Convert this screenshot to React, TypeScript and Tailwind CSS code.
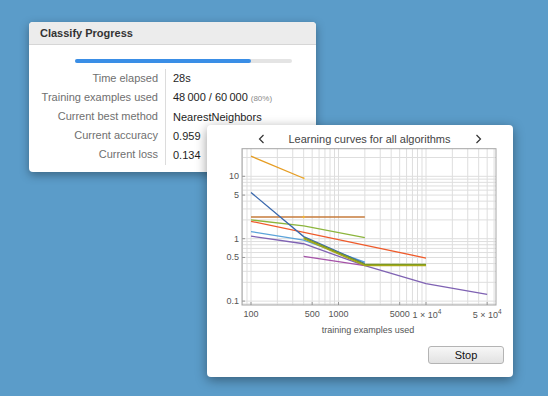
const X = (n: number) => 251 + 87.5 * Math.log10(n / 100);
const Y = (v: number) => 238.7 - 62.4 * Math.log10(v);

const curves: { color: string; pts: [number, number][]; w?: number }[] = [
  { color: "#e69d23", pts: [[100, 21], [400, 9.3]] },
  { color: "#c67b3b", pts: [[100, 2.23], [2000, 2.23]], w: 1.6 },
  { color: "#8cb53c", pts: [[100, 2.0], [400, 1.6], [2000, 1.04]] },
  { color: "#ef5a2a", pts: [[100, 1.9], [10000, 0.49]] },
  { color: "#5ba3d9", pts: [[100, 1.3], [400, 0.95], [2000, 0.42]] },
  { color: "#7f62b3", pts: [[100, 1.1], [400, 0.83], [2000, 0.37], [10000, 0.19], [50000, 0.128]] },
  { color: "#a552a8", pts: [[400, 0.52], [2000, 0.37]] },
  { color: "#3a68ad", pts: [[100, 5.5], [400, 1.08], [2000, 0.4]] },
  { color: "#7d9a22", pts: [[400, 1.04], [2000, 0.385], [10000, 0.385]], w: 1.6 },
  { color: "#a8a818", pts: [[400, 1.0], [2000, 0.37], [10000, 0.37]] },
];

const rows = [
  ["Time elapsed", "28s"],
  ["Training examples used", "48\u2009000 / 60\u2009000"],
  ["Current best method", "NearestNeighbors"],
  ["Current accuracy", "0.959"],
  ["Current loss", "0.134"],
];

function Chevron({ right }: { right?: boolean }) {
  return (
    <svg width="7" height="10" viewBox="0 0 7 10" className="block">
      <path
        d={right ? "M1.5 1 L5.5 5 L1.5 9" : "M5.5 1 L1.5 5 L5.5 9"}
        fill="none"
        stroke="#333"
        strokeWidth="1.2"
      />
    </svg>
  );
}

function Chart() {
  const L = 242, R = 496, T = 148.7, B = 305;
  const xs: number[] = [];
  for (let d = 1; d <= 4; d++)
    for (let k = 1; k <= 9; k++) {
      const x = X(k * Math.pow(10, d));
      if (x > L + 0.5 && x < R - 0.5) xs.push(x);
    }
  const ys: number[] = [];
  for (let d = -2; d <= 1; d++)
    for (let k = 1; k <= 9; k++) {
      const y = Y(k * Math.pow(10, d));
      if (y > T + 0.5 && y < B - 0.5) ys.push(y);
    }
  const yl: [string, number][] = [["10", 10], ["5", 5], ["1", 1], ["0.5", 0.5], ["0.1", 0.1]];
  const xl: [string, number][] = [["100", 100], ["500", 500], ["1000", 1000], ["5000", 5000]];
  return (
    <svg width="306" height="191" className="block">
      <g transform="translate(-207,-147)" fontFamily="Liberation Sans, Arial, sans-serif" fontSize="9" fill="#555">
        <rect x={L} y={T} width={R - L} height={B - T} fill="#fff" />
        {xs.map((x, i) => (
          <line key={"x" + i} x1={x} x2={x} y1={T} y2={B} stroke="#dedede" strokeWidth="1" />
        ))}
        {ys.map((y, i) => (
          <line key={"y" + i} x1={L} x2={R} y1={y} y2={y} stroke="#dedede" strokeWidth="1" />
        ))}
        {curves.map((c, i) => (
          <polyline
            key={i}
            points={c.pts.map(([n, v]) => `${X(n)},${Y(v)}`).join(" ")}
            fill="none"
            stroke={c.color}
            strokeWidth={c.w ?? 1.3}
          />
        ))}
        <circle cx={X(400)} cy={Y(2.23)} r="1.2" fill="#f2b632" />
        <circle cx={X(400)} cy={Y(9.3)} r="0.9" fill="#f2b632" />
        <rect x={L} y={T} width={R - L} height={B - T} fill="none" stroke="#a5a5a5" strokeWidth="1" />
        {yl.map(([t, v]) => (
          <g key={t}>
            <line x1={L} x2={L + 3} y1={Y(v)} y2={Y(v)} stroke="#999" />
            <text x="239" y={Y(v) + 3} textAnchor="end">{t}</text>
          </g>
        ))}
        {xl.map(([t, n]) => (
          <g key={t}>
            <line x1={X(n)} x2={X(n)} y1={B} y2={B - 3} stroke="#999" />
            <text x={X(n)} y="316.5" textAnchor="middle">{t}</text>
          </g>
        ))}
        <line x1={X(10000)} x2={X(10000)} y1={B} y2={B - 3} stroke="#999" />
        <line x1={X(50000)} x2={X(50000)} y1={B} y2={B - 3} stroke="#999" />
        <text x={X(10000) + 1} y="317.5" textAnchor="middle">
          1 × 10<tspan fontSize="6.5" dy="-3.5">4</tspan>
        </text>
        <text x={X(50000)} y="317.5" textAnchor="middle">
          5 × 10<tspan fontSize="6.5" dy="-3.5">4</tspan>
        </text>
        <text x="368" y="333" textAnchor="middle">training examples used</text>
      </g>
    </svg>
  );
}

export default function App() {
  return (
    <div className="relative w-[548px] h-[396px] overflow-hidden bg-[#5b9cc9] font-['Liberation_Sans',Arial,sans-serif]">
      {/* Classify Progress window */}
      <div className="absolute left-[29px] top-[22px] w-[287px] rounded-[4px] bg-white shadow-[0_3px_10px_rgba(0,0,0,0.35)] overflow-hidden">
        <div className="h-[23px] bg-[#ececec] border-b border-[#d6d6d6] pl-[11px] flex items-center text-[11px] font-bold text-[#333]">
          Classify Progress
        </div>
        <div className="pb-[7px]">
          <div className="ml-[46px] mt-[14px] w-[217px] h-[4px] rounded-full bg-[#e4e4e4]">
            <div className="w-[176px] h-[4px] rounded-full bg-[#3a8ee6]" />
          </div>
          <div className="mt-[6px] flex text-[11px] leading-[19px]">
            <div className="w-[137px] pr-[7px] text-right text-[#6f6f6f] border-r border-[#dcdcdc]">
              {rows.map(([l]) => (
                <div key={l}>{l}</div>
              ))}
            </div>
            <div className="pl-[7px] text-[#1e1e1e]">
              {rows.map(([l, v], i) => (
                <div key={l}>
                  {v}
                  {i === 1 && <span className="ml-[3px] text-[8px] text-[#8a8a8a]">(80%)</span>}
                </div>
              ))}
            </div>
          </div>
        </div>
      </div>

      {/* Learning curves window */}
      <div className="absolute left-[207px] top-[125px] w-[306px] h-[252px] rounded-[4px] bg-white shadow-[0_3px_12px_rgba(0,0,0,0.4)]">
        <div className="h-[22px] pt-[6px] pl-[50px] pr-[31px] flex items-center text-[#444] text-[11px] leading-[16px]">
          <span className="w-[10px] flex justify-start pl-[1px]">
            <Chevron />
          </span>
          <span className="flex-1 text-center">Learning curves for all algorithms</span>
          <span className="w-[10px] flex justify-end">
            <Chevron right />
          </span>
        </div>
        <Chart />
        <div className="mt-[8px] flex justify-end pr-[9px]">
          <button className="w-[76px] h-[18px] rounded-[3px] border border-[#b4b4b4] bg-gradient-to-b from-[#f7f7f7] to-[#e2e2e2] text-[11px] text-[#111] leading-none">
            Stop
          </button>
        </div>
      </div>
    </div>
  );
}
